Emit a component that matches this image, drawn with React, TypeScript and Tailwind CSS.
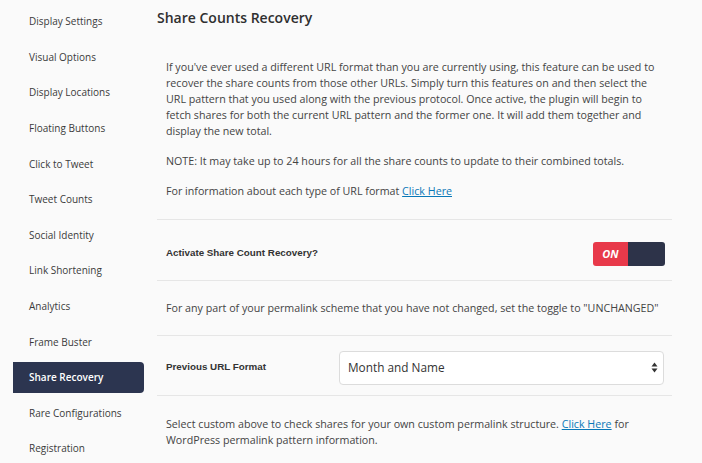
const menu = [
  'Display Settings',
  'Visual Options',
  'Display Locations',
  'Floating Buttons',
  'Click to Tweet',
  'Tweet Counts',
  'Social Identity',
  'Link Shortening',
  'Analytics',
  'Frame Buster',
  'Share Recovery',
  'Rare Configurations',
  'Registration',
];

const Sidebar = ({ active }: { active: string }): JSX.Element => (
  <aside className="w-[150px] shrink-0 pt-[4px]">
    {menu.map(item => (
      <div key={item} className="h-[35.6px] flex items-center">
        {item === active ? (
          <div className="ml-[13px] w-[131px] h-[31px] flex items-center pl-[16px] bg-[#2c3550] rounded-r-[4px] text-white font-semibold text-[10px]">
            {item}
          </div>
        ) : (
          <span className="pl-[29px] text-[10px] text-[#3a3a3a]">{item}</span>
        )}
      </div>
    ))}
  </aside>
);

const Toggle = (): JSX.Element => (
  <div className="flex w-[72px] h-[24px] rounded-[3px] overflow-hidden mt-[8px]">
    <div className="w-[35px] bg-[#e8394a] text-white text-[11px] font-bold italic flex items-center justify-center">
      ON
    </div>
    <div className="flex-1 bg-[#2d3349]" />
  </div>
);

const SelectBox = (): JSX.Element => (
  <div className="w-[325px] h-[34px] mt-[4px] bg-white border border-[#dcdcdc] rounded-[4px] flex items-center justify-between pl-[8px] pr-[5px] text-[11.8px] text-[#333]">
    <span>Month and Name</span>
    <svg width="7" height="11" viewBox="0 0 7 11">
      <path d="M3.5 0.5 L6.5 4.5 L0.5 4.5 Z" fill="#333" />
      <path d="M3.5 10.5 L6.5 6.5 L0.5 6.5 Z" fill="#333" />
    </svg>
  </div>
);

const App = (): JSX.Element => {
  return (
    <div className="flex min-h-[463px] bg-[#fafafa] font-['Open_Sans','Liberation_Sans',sans-serif] text-[#444]">
      <Sidebar active="Share Recovery" />
      <main className="flex-1 pl-[7px] pr-[30px]">
        <h1 className="mt-[8px] text-[14px] leading-[20px] font-semibold text-[#2f2f2f]">Share Counts Recovery</h1>

        <div className="mt-[31px] pl-[9px] pr-[12px] pb-[20px] text-[10.7px] leading-[16px] space-y-[14px]">
          <p>
            If you've ever used a different URL format than you are currently using, this feature can be used to recover the
            share counts from those other URLs. Simply turn this features on and then select the URL pattern that you used
            along with the previous protocol. Once active, the plugin will begin to fetch shares for both the current URL
            pattern and the former one. It will add them together and display the new total.
          </p>
          <p>NOTE: It may take up to 24 hours for all the share counts to update to their combined totals.</p>
          <p>
            For information about each type of URL format <a href="#" className="text-[#0a78b8] underline">Click Here</a>
          </p>
        </div>

        <div className="h-[61px] border-t border-[#e6e6e6] flex items-center justify-between pl-[9px] pr-[7px]">
          <span className="mt-[6px] font-['Liberation_Sans',sans-serif] font-bold text-[9.8px] text-[#333]">
            Activate Share Count Recovery?
          </span>
          <Toggle />
        </div>

        <div className="h-[55px] border-t border-[#e6e6e6] flex items-center pl-[9px] text-[10.7px]">
          For any part of your permalink scheme that you have not changed, set the toggle to "UNCHANGED"
        </div>

        <div className="h-[61px] border-t border-b border-[#e6e6e6] flex items-center pl-[9px]">
          <span className="w-[173px] mt-[4px] font-['Liberation_Sans',sans-serif] font-bold text-[9.8px] text-[#333]">
            Previous URL Format
          </span>
          <SelectBox />
        </div>

        <p className="pt-[20px] pl-[9px] pr-[12px] text-[10.7px] leading-[16px]">
          Select custom above to check shares for your own custom permalink structure.{' '}
          <a href="#" className="text-[#0a78b8] underline">Click Here</a> for WordPress permalink pattern information.
        </p>
      </main>
    </div>
  );
};

export default App;
